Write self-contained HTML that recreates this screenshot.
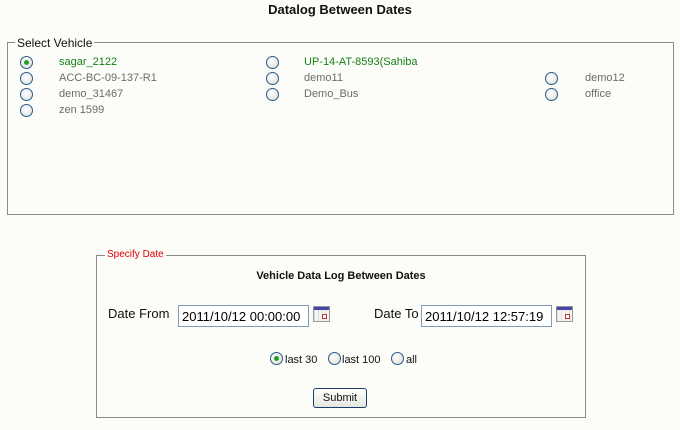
<!DOCTYPE html>
<html><head><style>
body{margin:0;width:680px;height:430px;background:#fcfcf9;font-family:"Liberation Sans",sans-serif;position:relative;overflow:hidden}
.a{position:absolute;white-space:nowrap}
.r{position:absolute;width:11px;height:11px;border:1px solid #2a5a8e;border-radius:50%;background:radial-gradient(circle at 40% 35%,#fff,#dcdcd6)}
.r.on::after{content:"";position:absolute;left:3px;top:3px;width:5px;height:5px;border-radius:50%;background:#21a121}
.t{font-size:11px;color:#6b6b6b}
.g{color:#168016}
.fs{position:absolute;border:1px solid #8a8a86;box-shadow:inset 1px 1px 0 #fff}
.in{position:absolute;height:20px;border:1px solid #7f9db9;background:#fff;font-size:13px;line-height:20px;padding-left:3px;box-sizing:border-box}
.cal{position:absolute;width:15px;height:14px;border:1px solid #999;background:repeating-linear-gradient(90deg,#ddd 0 1px,#f4f4f4 1px 4px)}
.cal::before{content:"";position:absolute;left:0;right:0;top:0;height:3px;background:#4646a8}
.cal::after{content:"";position:absolute;right:2px;bottom:2px;width:3px;height:3px;border:1px solid #c03030;background:#fff}
</style></head><body>
<div class="a" style="left:0;width:680px;top:2px;text-align:center;font-weight:bold;font-size:13px;color:#111">Datalog Between Dates</div>
<div class="fs" style="left:7px;top:42px;width:665px;height:171px"></div>
<div class="a" style="left:15px;top:36px;background:#fcfcf9;padding:0 2px;font-size:12px;color:#111">Select Vehicle</div>
<div class="r on" style="left:20px;top:56px"></div><div class="a t g" style="left:59px;top:56px">sagar_2122</div>
<div class="r" style="left:20px;top:72px"></div><div class="a t" style="left:59px;top:72px">ACC-BC-09-137-R1</div>
<div class="r" style="left:20px;top:88px"></div><div class="a t" style="left:59px;top:88px">demo_31467</div>
<div class="r" style="left:20px;top:104px"></div><div class="a t" style="left:59px;top:104px">zen 1599</div>
<div class="r" style="left:266px;top:56px"></div><div class="a t g" style="left:304px;top:56px">UP-14-AT-8593(Sahiba</div>
<div class="r" style="left:266px;top:72px"></div><div class="a t" style="left:304px;top:72px">demo11</div>
<div class="r" style="left:266px;top:88px"></div><div class="a t" style="left:304px;top:88px">Demo_Bus</div>
<div class="r" style="left:545px;top:72px"></div><div class="a t" style="left:585px;top:72px">demo12</div>
<div class="r" style="left:545px;top:88px"></div><div class="a t" style="left:585px;top:88px">office</div>
<div class="fs" style="left:96px;top:255px;width:488px;height:161px"></div>
<div class="a" style="left:105px;top:249px;background:#fcfcf9;padding:0 2px;font-size:10px;color:#e00000">Specify Date</div>
<div class="a" style="left:96px;width:490px;top:270px;text-align:center;font-weight:bold;font-size:11px;color:#111">Vehicle Data Log Between Dates</div>
<div class="a" style="left:108px;top:306px;font-size:13px;color:#111">Date From</div>
<div class="in" style="left:178px;top:305px;width:131px;height:22px;line-height:21px">2011/10/12 00:00:00</div>
<div class="cal" style="left:313px;top:306px"></div>
<div class="a" style="left:374px;top:306px;font-size:13px;color:#111">Date To</div>
<div class="in" style="left:421px;top:305px;width:131px;height:22px;line-height:21px">2011/10/12 12:57:19</div>
<div class="cal" style="left:556px;top:306px"></div>
<div class="r on" style="left:270px;top:352px"></div><div class="a" style="left:285px;top:354px;font-size:11px;color:#111">last 30</div>
<div class="r" style="left:328px;top:352px"></div><div class="a" style="left:342px;top:354px;font-size:11px;color:#111">last 100</div>
<div class="r" style="left:391px;top:352px"></div><div class="a" style="left:406px;top:354px;font-size:11px;color:#111">all</div>
<div class="a" style="left:313px;top:388px;width:52px;height:18px;border:1px solid #1c3c6c;border-radius:3px;background:linear-gradient(#fff,#e6e6e0);font-size:11px;text-align:center;line-height:18px;color:#111">Submit</div>
</body></html>
